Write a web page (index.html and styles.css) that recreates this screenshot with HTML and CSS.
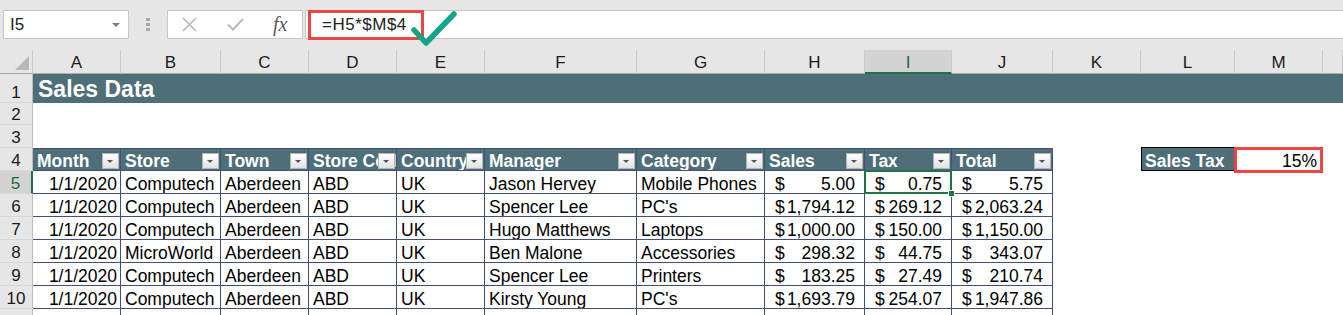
FILE: index.html
```html
<!DOCTYPE html>
<html lang="en">

<head>
    <meta charset="UTF-8">
    <title>Sales Data</title>
    <link rel="stylesheet" href="styles.css">
</head>

<body>
    <!-- formula bar -->
    <div class="toolbar">
        <div class="namebox"><span>I5</span><span class="caret"></span></div>
        <div class="grip"><i></i><i></i><i></i></div>
        <div class="fxbox">
            <svg width="15" height="15" viewBox="0 0 15 15"><path d="M1 1L14 14M14 1L1 14" stroke="#b8b8b8" stroke-width="1.6"/></svg>
            <svg class="ok" width="17" height="13" viewBox="0 0 17 13"><path d="M1 6.5L6 11.5L16 1" fill="none" stroke="#bcbcbc" stroke-width="2.2"/></svg>
            <span class="fx">fx</span>
        </div>
        <div class="formula"><span class="formula-hl">=H5*$M$4</span></div>
        <svg class="tick" width="70" height="45" viewBox="0 0 70 45"><path d="M14 25L26 38L54 9" fill="none" stroke="#14a586" stroke-width="5.5" stroke-linecap="round" stroke-linejoin="round"/></svg>
    </div>

    <div class="sheet">
        <div class="row r-colhead">
            <div class="ch corner"><span class="tri"></span></div>
            <div class="ch">A</div>
            <div class="ch">B</div>
            <div class="ch">C</div>
            <div class="ch">D</div>
            <div class="ch">E</div>
            <div class="ch">F</div>
            <div class="ch">G</div>
            <div class="ch">H</div>
            <div class="ch active">I</div>
            <div class="ch">J</div>
            <div class="ch">K</div>
            <div class="ch">L</div>
            <div class="ch">M</div>
            <div class="ch"></div>
        </div>

        <div class="row r-title">
            <div class="rh">1</div>
            <div class="title">Sales Data</div>
        </div>
        <div class="row r-2">
            <div class="rh">2</div>
        </div>
        <div class="row r-std">
            <div class="rh">3</div>
        </div>

        <div class="row r-std">
            <div class="rh">4</div>
            <div class="th">Month<span class="dd"></span></div>
            <div class="th">Store<span class="dd"></span></div>
            <div class="th">Town<span class="dd"></span></div>
            <div class="th">Store Code<span class="dd"></span></div>
            <div class="th">Country<span class="dd"></span></div>
            <div class="th">Manager<span class="dd"></span></div>
            <div class="th">Category<span class="dd"></span></div>
            <div class="th">Sales<span class="dd"></span></div>
            <div class="th">Tax<span class="dd"></span></div>
            <div class="th">Total<span class="dd"></span></div>
            <div></div>
            <div class="label">Sales Tax</div>
            <div class="rate">15%</div>
        </div>

        <div class="row r-std">
            <div class="rh active">5</div>
            <div class="td num">1/1/2020</div>
            <div class="td">Computech</div>
            <div class="td">Aberdeen</div>
            <div class="td">ABD</div>
            <div class="td">UK</div>
            <div class="td">Jason Hervey</div>
            <div class="td">Mobile Phones</div>
            <div class="td money"><span>$</span><span>5.00</span></div>
            <div class="td money sel"><span>$</span><span>0.75</span></div>
            <div class="td money"><span>$</span><span>5.75</span></div>
        </div>
        <div class="row r-std">
            <div class="rh">6</div>
            <div class="td num">1/1/2020</div>
            <div class="td">Computech</div>
            <div class="td">Aberdeen</div>
            <div class="td">ABD</div>
            <div class="td">UK</div>
            <div class="td">Spencer Lee</div>
            <div class="td">PC's</div>
            <div class="td money"><span>$</span><span>1,794.12</span></div>
            <div class="td money"><span>$</span><span>269.12</span></div>
            <div class="td money"><span>$</span><span>2,063.24</span></div>
        </div>
        <div class="row r-std">
            <div class="rh">7</div>
            <div class="td num">1/1/2020</div>
            <div class="td">Computech</div>
            <div class="td">Aberdeen</div>
            <div class="td">ABD</div>
            <div class="td">UK</div>
            <div class="td">Hugo Matthews</div>
            <div class="td">Laptops</div>
            <div class="td money"><span>$</span><span>1,000.00</span></div>
            <div class="td money"><span>$</span><span>150.00</span></div>
            <div class="td money"><span>$</span><span>1,150.00</span></div>
        </div>
        <div class="row r-std">
            <div class="rh">8</div>
            <div class="td num">1/1/2020</div>
            <div class="td">MicroWorld</div>
            <div class="td">Aberdeen</div>
            <div class="td">ABD</div>
            <div class="td">UK</div>
            <div class="td">Ben Malone</div>
            <div class="td">Accessories</div>
            <div class="td money"><span>$</span><span>298.32</span></div>
            <div class="td money"><span>$</span><span>44.75</span></div>
            <div class="td money"><span>$</span><span>343.07</span></div>
        </div>
        <div class="row r-std">
            <div class="rh">9</div>
            <div class="td num">1/1/2020</div>
            <div class="td">Computech</div>
            <div class="td">Aberdeen</div>
            <div class="td">ABD</div>
            <div class="td">UK</div>
            <div class="td">Spencer Lee</div>
            <div class="td">Printers</div>
            <div class="td money"><span>$</span><span>183.25</span></div>
            <div class="td money"><span>$</span><span>27.49</span></div>
            <div class="td money"><span>$</span><span>210.74</span></div>
        </div>
        <div class="row r-std">
            <div class="rh">10</div>
            <div class="td num">1/1/2020</div>
            <div class="td">Computech</div>
            <div class="td">Aberdeen</div>
            <div class="td">ABD</div>
            <div class="td">UK</div>
            <div class="td">Kirsty Young</div>
            <div class="td">PC's</div>
            <div class="td money"><span>$</span><span>1,693.79</span></div>
            <div class="td money"><span>$</span><span>254.07</span></div>
            <div class="td money"><span>$</span><span>1,947.86</span></div>
        </div>
        <!-- next row, cut off by the window -->
        <div class="row r-std">
            <div class="rh"></div>
            <div class="td"></div>
            <div class="td"></div>
            <div class="td"></div>
            <div class="td"></div>
            <div class="td"></div>
            <div class="td"></div>
            <div class="td"></div>
            <div class="td"></div>
            <div class="td"></div>
            <div class="td"></div>
        </div>
    </div>
</body>

</html>
```

FILE: styles.css
```css
body {
    margin: 0;
    width: 1343px;
    height: 315px;
    overflow: hidden;
    background: #fff;
    font-family: "Liberation Sans", Arial, sans-serif;
    color: #000;
}

/* formula bar */
.toolbar {
    position: relative;
    display: flex;
    align-items: flex-start;
    height: 50px;
    padding-top: 10px;
    box-sizing: border-box;
    background: #e6e6e6;
}

.namebox {
    margin-left: 3px;
    width: 126px;
    height: 29px;
    box-sizing: border-box;
    border: 1px solid #c6c6c6;
    background: #fff;
    display: flex;
    align-items: center;
    justify-content: space-between;
    padding: 0 8px 0 6px;
    font-size: 17px;
    color: #222;
}

.caret {
    border-left: 4px solid transparent;
    border-right: 4px solid transparent;
    border-top: 4px solid #7b7b7b;
}

.grip {
    margin-left: 17px;
    padding-top: 8px;
    display: flex;
    flex-direction: column;
    gap: 2px;
}

.grip i {
    width: 4px;
    height: 3px;
    background: #a8a8a8;
}

.fxbox {
    margin-left: 17px;
    width: 136px;
    height: 29px;
    box-sizing: border-box;
    border: 1px solid #c6c6c6;
    background: #fff;
    display: flex;
    align-items: center;
    padding-left: 14px;
}

.fxbox .ok {
    margin-left: 30px;
}

.fx {
    margin-left: 29px;
    font-family: "Liberation Serif", serif;
    font-style: italic;
    font-size: 20px;
    color: #5a5a5a;
}

.formula {
    flex: 1;
    margin-left: 2px;
    height: 29px;
    box-sizing: border-box;
    border: 1px solid #c6c6c6;
    border-right: none;
    background: #fff;
    display: flex;
}

.formula-hl {
    margin: -1px 0 0 2px;
    height: 30px;
    box-sizing: border-box;
    border: 3px solid #ef4444;
    padding: 0 14px 0 11px;
    display: flex;
    align-items: center;
    font-size: 17px;
    letter-spacing: 0.5px;
    color: #222;
}

.tick {
    position: absolute;
    left: 400px;
    top: 5px;
}

/* grid */
.row {
    display: grid;
    grid-template-columns: 33px 88px 100px 88px 88px 88px 152px 128px 100px 87px 101px 88px 94px 88px 1fr;
}

.r-colhead { height: 24px; }
.r-title { height: 29px; }
.r-2 { height: 22px; }
.r-std { height: 23px; }

.ch {
    position: relative;
    background: #e6e6e6;
    border-right: 1px solid #c9c9c9;
    border-bottom: 1px solid #ababab;
    box-sizing: border-box;
    text-align: center;
    font-size: 17px;
    line-height: 18px;
    padding-top: 4px;
    color: #1a1a1a;
}

.ch.active {
    background: #d3d3d3;
    color: #1e6b40;
    border-bottom: 2px solid #217346;
}

.corner .tri {
    position: absolute;
    right: 3px;
    bottom: 3px;
    border-left: 14px solid transparent;
    border-bottom: 14px solid #b8b8b8;
}

.rh {
    grid-column: 1;
    background: #e6e6e6;
    border-right: 1px solid #bdbdbd;
    border-bottom: 1px solid #d8d8d8;
    box-sizing: border-box;
    display: flex;
    align-items: flex-end;
    justify-content: center;
    font-size: 17px;
    line-height: 18px;
    color: #1a1a1a;
}

.rh.active {
    background: #d3d3d3;
    color: #1e6b40;
    border-right: 2px solid #217346;
}

.title {
    grid-column: 2 / -1;
    background: #4e6e78;
    color: #fff;
    font-weight: bold;
    font-size: 23px;
    line-height: 26px;
    padding: 2px 0 0 5px;
}

.th {
    position: relative;
    overflow: hidden;
    white-space: nowrap;
    box-sizing: border-box;
    background: #4e6e78;
    color: #fff;
    font-weight: bold;
    font-size: 17.5px;
    line-height: 18px;
    padding: 3px 0 0 4px;
    border-top: 1px solid #41507a;
    border-right: 1px solid #41507a;
    border-bottom: 1px solid #41507a;
}

.dd {
    position: absolute;
    right: 1px;
    bottom: 1px;
    width: 17px;
    height: 16px;
    box-sizing: border-box;
    border: 1px solid #b4b4b4;
    background: linear-gradient(#ffffff, #e2e2e2);
}

.dd::after {
    content: "";
    position: absolute;
    left: 4px;
    top: 6px;
    border-left: 3.5px solid transparent;
    border-right: 3.5px solid transparent;
    border-top: 3.5px solid #555;
}

.td {
    box-sizing: border-box;
    white-space: nowrap;
    overflow: hidden;
    font-size: 17.5px;
    line-height: 18px;
    padding: 4px 0 0 4px;
    border-right: 1px solid #41507a;
    border-bottom: 1px solid #41507a;
}

.td.num {
    text-align: right;
    padding-right: 3px;
}

.td.money {
    display: flex;
    justify-content: space-between;
    padding: 4px 9px 0 10px;
}

.td.sel {
    position: relative;
    overflow: visible;
}

.td.sel::after {
    content: "";
    position: absolute;
    left: -1px;
    top: -1px;
    right: -1px;
    bottom: -1px;
    border: 2px solid #217346;
}

.td.sel::before {
    content: "";
    position: absolute;
    right: -4px;
    bottom: -4px;
    width: 5px;
    height: 5px;
    background: #217346;
    border: 1px solid #fff;
    z-index: 1;
}

.label {
    box-sizing: border-box;
    margin-top: -1px;
    background: #4e6e78;
    border: 1px solid #000;
    color: #fff;
    font-weight: bold;
    font-size: 17.5px;
    line-height: 18px;
    padding: 4px 0 0 3px;
    white-space: nowrap;
}

.rate {
    box-sizing: border-box;
    margin: -1px 0 -2px -1px;
    border: 3px solid #ef4444;
    text-align: right;
    font-size: 17.5px;
    line-height: 18px;
    padding: 2px 3px 0 0;
    background: #fff;
}
```
